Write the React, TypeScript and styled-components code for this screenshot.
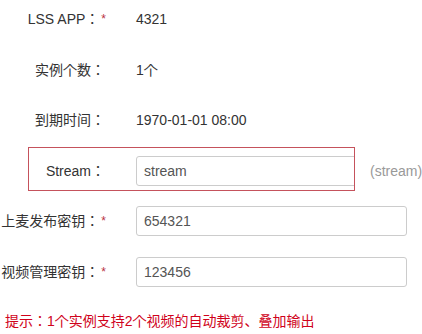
import styled, { createGlobalStyle } from "styled-components";

const GlobalStyle = createGlobalStyle`
    html, body {
        margin: 0;
        padding: 0;
        background: #fff;
    }

    body {
        font-family: "Liberation Sans", "Noto Sans CJK JP", "Noto Sans CJK SC", sans-serif;
        font-size: 14px;
        color: #333;
        overflow: hidden;
    }
`

const Form = styled.div`
    display: flex;
    flex-direction: column;
    gap: 20.5px;
    padding-top: 4px;
    width: 422px;
`

const Row = styled.div`
    display: flex;
    align-items: center;
    height: 30px;
`

const Field = styled.div<{ $marked?: boolean }>`
    display: flex;
    align-items: center;
    flex-shrink: 0;
    box-sizing: border-box;
    ${({$marked}) => $marked ? `
        margin: -9px 0 -5px 28px;
        padding: 8px 0 4px 0;
        width: 327px;
        border: 1px solid #c5525c;
        overflow: hidden;
    ` : `
        padding-left: 29px;
        height: 30px;
    `}
`

const Label = styled.div<{ $required?: boolean }>`
    display: flex;
    justify-content: flex-end;
    align-items: center;
    width: 79px;
    flex-shrink: 0;
    white-space: nowrap;
    padding-right: ${({$required}) => $required ? "2px" : "3px"};
    box-sizing: border-box;
    line-height: 30px;
`

const Star = styled.span`
    color: #b8323f;
    font-size: 12px;
    margin-left: 2px;
`

const Value = styled.div`
    margin-left: 28px;
    line-height: 30px;
    white-space: nowrap;
    flex-shrink: 0;
`

const Input = styled.input`
    margin-left: 28px;
    width: 271px;
    height: 30px;
    box-sizing: border-box;
    flex-shrink: 0;
    border: 1px solid #ccc;
    border-radius: 3px;
    padding: 0 7px;
    font-family: "Liberation Sans", "Noto Sans CJK JP", sans-serif;
    font-size: 14px;
    color: #555;
    background: #fff;
    outline: none;
`

const Note = styled.span`
    margin-left: 15px;
    color: #999;
    white-space: nowrap;
    flex-shrink: 0;
`

const Hint = styled.div`
    margin-top: 4px;
    color: #d0021b;
    padding-left: 5px;
    line-height: 20px;
    white-space: nowrap;
`

const App = () => {
    return (
        <>
            <GlobalStyle/>
            <Form>
                <Row>
                    <Field>
                        <Label $required>LSS APP：<Star>*</Star></Label>
                        <Value>4321</Value>
                    </Field>
                </Row>
                <Row>
                    <Field>
                        <Label>实例个数：</Label>
                        <Value>1个</Value>
                    </Field>
                </Row>
                <Row>
                    <Field>
                        <Label>到期时间：</Label>
                        <Value>1970-01-01 08:00</Value>
                    </Field>
                </Row>
                <Row>
                    <Field $marked>
                        <Label>Stream：</Label>
                        <Input defaultValue="stream"/>
                    </Field>
                    <Note>(stream)</Note>
                </Row>
                <Row>
                    <Field>
                        <Label $required>上麦发布密钥：<Star>*</Star></Label>
                        <Input defaultValue="654321"/>
                    </Field>
                </Row>
                <Row>
                    <Field>
                        <Label $required>视频管理密钥：<Star>*</Star></Label>
                        <Input defaultValue="123456"/>
                    </Field>
                </Row>
                <Hint>提示：1个实例支持2个视频的自动裁剪、叠加输出</Hint>
            </Form>
        </>
    );
};

export default App;
